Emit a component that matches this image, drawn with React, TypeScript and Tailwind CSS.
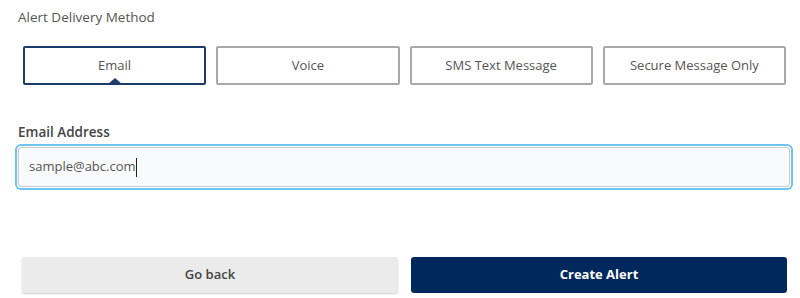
import React from 'react';

const methods = ['Email', 'Voice', 'SMS Text Message', 'Secure Message Only'];

export default function App() {
  const selected = 'Email';

  return (
    <div className="w-[800px] h-[298px] bg-white font-['Open_Sans',sans-serif] pt-[8px]">
      <p className="ml-[18px] text-[13.5px] leading-[18px] text-[#555]">Alert Delivery Method</p>

      {/* Delivery options */}
      <div className="grid grid-cols-4 gap-[10px] ml-[23px] mr-[14px] mt-[20px]">
        {methods.map((m) => {
          const active = m === selected;
          return (
            <button
              key={m}
              className={`relative h-[39px] rounded-[2px] border-2 bg-white text-[13px] text-[#555] ${
                active ? 'border-[#1c3a6c]' : 'border-[#a9a9a9]'
              }`}
            >
              {m}
              {active && (
                <span className="absolute left-1/2 -translate-x-1/2 bottom-[-2px] w-0 h-0 border-l-[8px] border-r-[8px] border-b-[7px] border-l-transparent border-r-transparent border-b-[#1c3a6c]" />
              )}
            </button>
          );
        })}
      </div>

      {/* Email address */}
      <p className="ml-[18px] mt-[38px] text-[13.5px] leading-[18px] font-semibold text-[#444]">Email Address</p>
      <div className="ml-[18px] mr-[10px] mt-[6px] h-[40px] rounded-[3px] border border-[#c8cdd4] bg-[#f9fafc] ring-2 ring-[#6fc2f4] ring-offset-1 flex items-center pl-[10px]">
        <span className="text-[13px] text-[#555]">sample@abc.com</span>
        <span className="w-px h-[19px] bg-[#222]" />
      </div>

      {/* Actions */}
      <div className="grid grid-cols-2 gap-[13px] ml-[22px] mr-[13px] mt-[70px]">
        <button className="h-[36px] rounded-[3px] bg-[#ebebeb] shadow-[0_1px_2px_rgba(0,0,0,0.2)] text-[13px] font-semibold text-[#444]">
          Go back
        </button>
        <button className="h-[36px] rounded-[3px] bg-[#01285c] text-[13px] font-bold text-white">
          Create Alert
        </button>
      </div>
    </div>
  );
}
